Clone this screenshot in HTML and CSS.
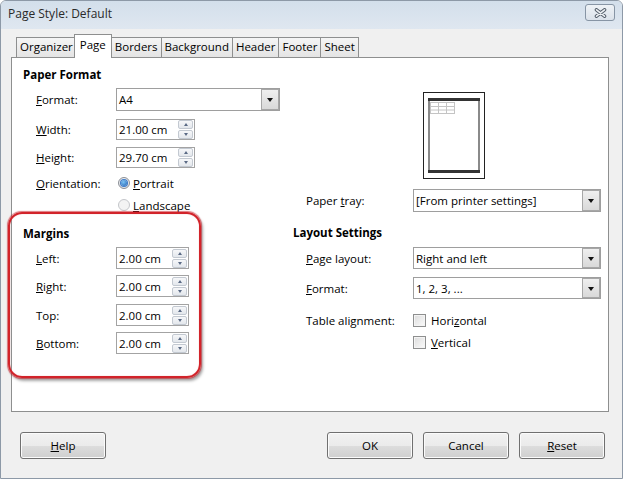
FILE: index.html
```html
<!DOCTYPE html>
<html>
<head>
<meta charset="utf-8">
<link rel="stylesheet" href="styles.css">
</head>
<body>
<div class="window">
  <div class="titlebar">
    <span class="title">Page Style: Default</span>
    <span class="close">
      <svg width="13" height="10" viewBox="0 0 13 10">
        <path d="M2.5 1.8 L10.5 8.2 M10.5 1.8 L2.5 8.2" stroke="#56606c" stroke-width="3.6" stroke-linecap="round" fill="none"/>
        <path d="M2.5 1.8 L10.5 8.2 M10.5 1.8 L2.5 8.2" stroke="#eef1f4" stroke-width="1.6" stroke-linecap="round" fill="none"/>
      </svg>
    </span>
  </div>
  <div class="client">
    <div class="tabs">
      <span class="tab">Organizer</span>
      <span class="tab active">Page</span>
      <span class="tab">Borders</span>
      <span class="tab">Background</span>
      <span class="tab">Header</span>
      <span class="tab">Footer</span>
      <span class="tab">Sheet</span>
    </div>
    <div class="panel">
      <div class="col-left">
        <div class="heading first">Paper Format</div>
        <div class="row r-combo">
          <span class="lbl"><u>F</u>ormat:</span>
          <div class="combo combo-left"><span class="combo-value">A4</span><span class="combo-btn"></span></div>
        </div>
        <div class="row r-spin1">
          <span class="lbl"><u>W</u>idth:</span>
          <div class="spin spin-wide"><span class="spin-value">21.00 cm</span><span class="spin-btns"><span class="up"></span><span class="down"></span></span></div>
        </div>
        <div class="row r-spin2">
          <span class="lbl"><u>H</u>eight:</span>
          <div class="spin spin-wide"><span class="spin-value">29.70 cm</span><span class="spin-btns"><span class="up"></span><span class="down"></span></span></div>
        </div>
        <div class="row r-opt">
          <span class="lbl"><u>O</u>rientation:</span>
          <span class="radio checked"></span><span class="opt-text"><u>P</u>ortrait</span>
        </div>
        <div class="row r-opt2">
          <span class="lbl"></span>
          <span class="radio disabled"></span><span class="opt-text"><u>L</u>andscape</span>
        </div>
        <div class="heading sec">Margins</div>
        <div class="row r-m1">
          <span class="lbl"><u>L</u>eft:</span>
          <div class="spin spin-narrow"><span class="spin-value">2.00 cm</span><span class="spin-btns"><span class="up"></span><span class="down"></span></span></div>
        </div>
        <div class="row r-m2">
          <span class="lbl"><u>R</u>ight:</span>
          <div class="spin spin-narrow"><span class="spin-value">2.00 cm</span><span class="spin-btns"><span class="up"></span><span class="down"></span></span></div>
        </div>
        <div class="row r-m3">
          <span class="lbl">Top:</span>
          <div class="spin spin-narrow"><span class="spin-value">2.00 cm</span><span class="spin-btns"><span class="up"></span><span class="down"></span></span></div>
        </div>
        <div class="row r-m2">
          <span class="lbl"><u>B</u>ottom:</span>
          <div class="spin spin-narrow"><span class="spin-value">2.00 cm</span><span class="spin-btns"><span class="up"></span><span class="down"></span></span></div>
        </div>
      </div>
      <div class="col-right">
        <div class="preview">
          <svg width="62" height="87" viewBox="0 0 62 87">
            <rect x="0.5" y="0.5" width="61" height="86" fill="#fff" stroke="#222"/>
            <rect x="6" y="7" width="50" height="73" fill="#fff" stroke="#8a8a8a" stroke-width="2"/>
            <rect x="5" y="6" width="52" height="3" fill="#333"/>
            <rect x="5" y="78" width="52" height="3" fill="#333"/>
            <g stroke="#c4c4c4" stroke-width="1" fill="none">
              <path d="M7 10.5 H32 M7 14.5 H32 M7 18 H32 M7 21.5 H32"/>
              <path d="M7.5 10 V22 M15.5 10 V22 M23.5 10 V22 M31.5 10 V22"/>
            </g>
          </svg>
        </div>
        <div class="row r-tray">
          <span class="lbl-r">Paper <u>t</u>ray:</span>
          <div class="combo combo-right"><span class="combo-value">[From printer settings]</span><span class="combo-btn"></span></div>
        </div>
        <div class="heading sec">Layout Settings</div>
        <div class="row r-layout">
          <span class="lbl-r"><u>P</u>age layout:</span>
          <div class="combo combo-right"><span class="combo-value">Right and left</span><span class="combo-btn"></span></div>
        </div>
        <div class="row r-format">
          <span class="lbl-r"><u>F</u>ormat:</span>
          <div class="combo combo-right"><span class="combo-value">1, 2, 3, ...</span><span class="combo-btn"></span></div>
        </div>
        <div class="row r-check1">
          <span class="lbl-r">Table alignment:</span>
          <span class="check"></span><span class="chk-text">Hori<u>z</u>ontal</span>
        </div>
        <div class="row r-check2">
          <span class="lbl-r"></span>
          <span class="check"></span><span class="chk-text"><u>V</u>ertical</span>
        </div>
      </div>
    </div>
    <div class="buttons">
      <span class="btn"><u>H</u>elp</span>
      <span class="btn push">OK</span>
      <span class="btn">Cancel</span>
      <span class="btn"><u>R</u>eset</span>
    </div>
  </div>
  <div class="highlight"></div>
</div>
</body>
</html>
```

FILE: styles.css
```css
html, body {
  margin: 0;
  padding: 0;
  background: #ffffff;
}
body {
  font-family: "Open Sans", "Noto Sans", sans-serif;
  font-size: 11.5px;
  color: #000;
}
u {
  text-decoration-thickness: 1px;
  text-underline-offset: 1px;
}
.window {
  position: relative;
  width: 623px;
  height: 479px;
  box-sizing: border-box;
  border: 1px solid #8d99a7;
  border-radius: 6px 6px 0 0;
  background: #f0f0f0;
  display: flex;
  flex-direction: column;
  overflow: hidden;
}
.titlebar {
  height: 28px;
  flex: none;
  display: flex;
  justify-content: space-between;
  align-items: flex-start;
  padding: 0 7px 0 7px;
  background: linear-gradient(#d3dfeb, #dfe7f0);
}
.title {
  line-height: 26px;
  color: #2a2a2a;
  font-size: 12px;
}
.close {
  margin-top: 3px;
  width: 30px;
  height: 17px;
  box-sizing: border-box;
  border: 1px solid #8795a5;
  border-radius: 3px;
  background: linear-gradient(#eef2f6, #dbe2ea);
  display: flex;
  align-items: center;
  justify-content: center;
}
.close svg { display: block; }
.client {
  flex: 1;
  padding-left: 10px;
  display: flex;
  flex-direction: column;
}
.tabs {
  height: 28px;
  display: flex;
  align-items: flex-end;
  padding-left: 5px;
}
.tab {
  height: 20px;
  box-sizing: border-box;
  border: 1px solid #8e8f8f;
  border-bottom: none;
  margin-right: -1px;
  padding: 0 3px;
  line-height: 18px;
  background: linear-gradient(#f5f5f5, #e4e4e4);
  white-space: nowrap;
}
.tab.active {
  height: 24px;
  margin: 0 -1px -1px -2px;
  padding: 0 5px;
  line-height: 20px;
  background: #fff;
  position: relative;
  z-index: 1;
}
.panel {
  width: 598px;
  height: 355px;
  box-sizing: border-box;
  border: 1px solid #8e8f8f;
  background: #fff;
  display: flex;
}
.col-left {
  width: 281px;
  flex: none;
  box-sizing: border-box;
  padding-left: 11px;
  display: flex;
  flex-direction: column;
}
.col-right {
  flex: 1;
  display: flex;
  flex-direction: column;
}
.heading {
  height: 18px;
  line-height: 18px;
  font-weight: 700;
}
.heading.first { margin-top: 8px; }
.heading.sec { margin-top: 12px; }
.row {
  display: flex;
  align-items: center;
  padding-left: 13px;
}
.lbl { width: 80px; flex: none; }
.lbl-r { width: 107px; flex: none; }
.r-combo { margin-top: 4px; height: 23px; }
.r-spin1 { margin-top: 8px; height: 21px; }
.r-spin2 { margin-top: 7px; height: 21px; }
.r-opt { margin-top: 7px; height: 16px; }
.r-opt2 { margin-top: 6px; height: 16px; }
.r-m1 { margin-top: 4px; height: 22px; }
.r-m2 { margin-top: 6px; height: 22px; }
.r-m3 { margin-top: 7px; height: 22px; }
.preview {
  margin-top: 34px;
  margin-left: 130px;
  height: 87px;
}
.preview svg { display: block; }
.r-tray { margin-top: 10px; height: 23px; }
.r-layout { margin-top: 5px; height: 22px; }
.r-format { margin-top: 8px; height: 22px; }
.r-check1 { margin-top: 13px; height: 16px; }
.r-check2 { margin-top: 6px; height: 16px; }

.combo {
  height: 100%;
  box-sizing: border-box;
  border: 1px solid #9e9e9e;
  background: #fff;
  display: flex;
}
.combo-left { width: 164px; }
.combo-right { width: 188px; }
.combo-value {
  flex: 1;
  padding-left: 2px;
  display: flex;
  align-items: center;
  white-space: nowrap;
}
.combo-btn {
  width: 18px;
  flex: none;
  box-sizing: border-box;
  border: 1px solid #a7a7a7;
  background: linear-gradient(#efefef, #d9d9d9);
  display: flex;
  align-items: center;
  justify-content: center;
}
.combo-btn::after {
  content: "";
  border-left: 3.5px solid transparent;
  border-right: 3.5px solid transparent;
  border-top: 4px solid #111;
  margin-top: 1px;
}

.spin {
  height: 100%;
  box-sizing: border-box;
  border: 1px solid #a3a3a3;
  background: #fff;
  display: flex;
  align-items: center;
  padding: 0 1px 0 2px;
}
.spin-wide { width: 79px; }
.spin-narrow { width: 73px; }
.spin-value { flex: 1; white-space: nowrap; }
.spin-btns {
  width: 15px;
  flex: none;
  display: flex;
  flex-direction: column;
  gap: 1px;
}
.spin-btns span {
  height: 9px;
  box-sizing: border-box;
  border: 1px solid #c3c9d1;
  border-radius: 2px;
  background: linear-gradient(#f6f7f9, #e3e7ec);
  display: flex;
  align-items: center;
  justify-content: center;
}
.spin-btns .up::after {
  content: "";
  border-left: 2.5px solid transparent;
  border-right: 2.5px solid transparent;
  border-bottom: 3px solid #5a6a85;
}
.spin-btns .down::after {
  content: "";
  border-left: 2.5px solid transparent;
  border-right: 2.5px solid transparent;
  border-top: 3px solid #5a6a85;
}

.radio {
  width: 12px;
  height: 12px;
  box-sizing: border-box;
  margin-left: 2px;
  border-radius: 50%;
  border: 1px solid #8b8f96;
  background: radial-gradient(circle at 50% 40%, #ffffff, #d6d9de);
  display: flex;
  align-items: center;
  justify-content: center;
}
.radio.checked::after {
  content: "";
  width: 6px;
  height: 6px;
  border-radius: 50%;
  background: radial-gradient(circle at 40% 35%, #7cc4f5, #1c5fb3);
  box-shadow: 0 0 0 1px #3b7ac9;
}
.radio.disabled {
  border-color: #c4c6ca;
  background: #f3f3f3;
}
.opt-text { margin-left: 3px; }

.check {
  width: 13px;
  height: 13px;
  box-sizing: border-box;
  border: 1px solid #8e8f8f;
  background: linear-gradient(135deg, #dcdcdc, #fbfbfb);
  box-shadow: inset 0 0 0 1px #f4f4f4;
  flex: none;
}
.chk-text { margin-left: 5px; }

.buttons {
  display: flex;
  gap: 10px;
  margin: 20px 17px 0 9px;
}
.btn {
  width: 86px;
  height: 27px;
  box-sizing: border-box;
  border: 1px solid #707070;
  border-radius: 3px;
  background: linear-gradient(#f2f2f2 0%, #ebebeb 50%, #dddddd 51%, #cfcfcf 100%);
  box-shadow: inset 0 0 0 1px #fbfbfb;
  display: flex;
  align-items: center;
  justify-content: center;
}
.btn.push { margin-left: auto; }

.highlight {
  position: absolute;
  left: 7px;
  top: 211px;
  width: 193px;
  height: 166px;
  box-sizing: border-box;
  border: 2px solid #d2232a;
  border-radius: 14px;
  box-shadow: 0 0 1px 0.5px rgba(200, 30, 40, 0.6), 2px 3px 3px rgba(0, 0, 0, 0.35), inset 0 0 1px rgba(230, 120, 120, 0.8);
  pointer-events: none;
}
```
